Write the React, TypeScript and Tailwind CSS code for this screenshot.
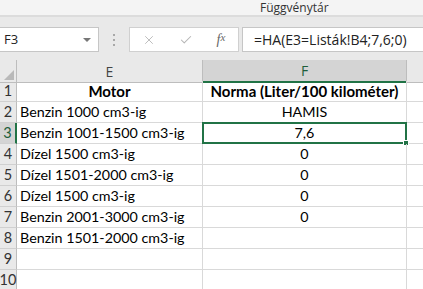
import { Check, X } from "lucide-react";

const rows: { motor: string; norma: string; bold?: boolean }[] = [
    { motor: "Motor", norma: "Norma (Liter/100 kilométer)", bold: true },
    { motor: "Benzin 1000 cm3-ig", norma: "HAMIS" },
    { motor: "Benzin 1001-1500 cm3-ig", norma: "7,6" },
    { motor: "Dízel 1500 cm3-ig", norma: "0" },
    { motor: "Dízel 1501-2000 cm3-ig", norma: "0" },
    { motor: "Dízel 1500 cm3-ig", norma: "0" },
    { motor: "Benzin 2001-3000 cm3-ig", norma: "0" },
    { motor: "Benzin 1501-2000 cm3-ig", norma: "" },
    { motor: "", norma: "" },
    { motor: "", norma: "" },
];

const cellFont = { fontFamily: "Lato, 'Liberation Sans', sans-serif" };

const App = () => {
    return (
        <div className="w-[423px] h-[289px] overflow-hidden bg-white text-black">
            {/* ribbon remainder */}
            <div className="h-[15px] bg-[#f4f4f4] flex items-center pl-[260px] text-[12px] text-[#333]" style={{ fontFamily: "'Open Sans', sans-serif" }}>
                Függvénytár
            </div>
            <div className="h-[2px] bg-[#dcdcdc]" />

            {/* formula bar */}
            <div className="h-[43px] bg-[#e9e9e9] flex items-start pt-[10px]">
                <div className="w-[99px] h-[25px] bg-white border border-[#c6c6c6] border-l-0 flex items-center justify-between pl-[4px] pr-[7px]" style={{ fontFamily: "'Open Sans', sans-serif" }}>
                    <span className="text-[13px] text-[#222]">F3</span>
                    <span className="w-0 h-0 border-l-[4px] border-r-[4px] border-t-[4px] border-l-transparent border-r-transparent border-t-[#777]" />
                </div>
                <div className="w-[30px] h-[25px] flex flex-col items-center justify-center gap-[3px]">
                    <span className="w-[2px] h-[2px] bg-[#a8a8a8]" />
                    <span className="w-[2px] h-[2px] bg-[#a8a8a8]" />
                    <span className="w-[2px] h-[2px] bg-[#a8a8a8]" />
                </div>
                <div className="w-[110px] h-[25px] bg-white border border-[#d0d0d0] flex items-center">
                    <div className="w-[38px] flex justify-center">
                        <X className="w-[14px] h-[14px] text-[#b5b5b5]" strokeWidth={1.5} />
                    </div>
                    <div className="w-[36px] flex justify-center">
                        <Check className="w-[14px] h-[14px] text-[#b5b5b5]" strokeWidth={1.8} />
                    </div>
                    <div className="flex-1 flex justify-center text-[14px] italic text-[#666]" style={{ fontFamily: "'Liberation Serif', serif" }}>
                        f<span className="text-[11px]">x</span>
                    </div>
                </div>
                <div className="ml-[3px] flex-1 h-[25px] bg-white border border-r-0 border-[#c6c6c6] flex items-center pl-[11px] text-[14px] text-[#222]" style={{ fontFamily: "'Open Sans', sans-serif" }}>
                    =HA(E3=Listák!B4;7,6;0)
                </div>
            </div>

            {/* sheet */}
            <div className="grid grid-cols-[17px_186px_204px_1fr] auto-rows-[21px]" style={cellFont}>
                {/* column headers */}
                <div className="h-[23px] bg-[#e9e9e9] border-r border-b border-[#bdbdbd] relative">
                    <span className="absolute right-[2px] bottom-[2px] w-0 h-0" style={{ borderBottom: "10px solid #b9b9b9", borderLeft: "10px solid transparent" }} />
                </div>
                <div className="h-[23px] bg-[#e9e9e9] border-r border-b border-[#bdbdbd] flex items-center justify-center text-[14px] text-[#444]" style={{ fontFamily: "'Open Sans', sans-serif" }}>
                    E
                </div>
                <div className="h-[23px] bg-[#d4d4d4] border-r border-[#bdbdbd] border-b-2 border-b-[#217346] flex items-center justify-center text-[14px] text-[#1e5e3a]" style={{ fontFamily: "'Open Sans', sans-serif" }}>
                    F
                </div>
                <div className="h-[23px] bg-[#e9e9e9] border-b border-[#bdbdbd]" />

                {rows.map((r, i) => {
                    const sel = i === 2;
                    return [
                        <div
                            key={`h${i}`}
                            className={`flex items-center justify-center text-[14.5px] border-b border-[#d0d0d0] ${sel ? "bg-[#d4d4d4] border-r-2 border-r-[#217346] text-[#1e5e3a]" : "bg-[#e9e9e9] border-r border-r-[#bdbdbd] text-[#333]"}`}
                        >
                            {i + 1}
                        </div>,
                        <div
                            key={`e${i}`}
                            className={`flex items-center border-r border-b border-[#d9d9d9] ${r.bold ? "justify-center font-bold text-[15px]" : "pl-[3px] text-[14.3px]"}`}
                        >
                            {r.motor}
                        </div>,
                        <div
                            key={`f${i}`}
                            className={`relative flex items-center justify-center border-r border-b border-[#d9d9d9] ${r.bold ? "font-bold text-[15px]" : "text-[14.3px]"}`}
                        >
                            {r.norma}
                            {sel && (
                                <span className="absolute left-[-1px] top-[-1px] right-[-1px] bottom-[-1px] border-2 border-[#217346]">
                                    <span className="absolute right-[-4px] bottom-[-4px] w-[6px] h-[6px] bg-[#217346] border border-white" />
                                </span>
                            )}
                        </div>,
                        <div key={`g${i}`} className="border-b border-[#d9d9d9]" />,
                    ];
                })}
            </div>
        </div>
    );
};

export default App;
